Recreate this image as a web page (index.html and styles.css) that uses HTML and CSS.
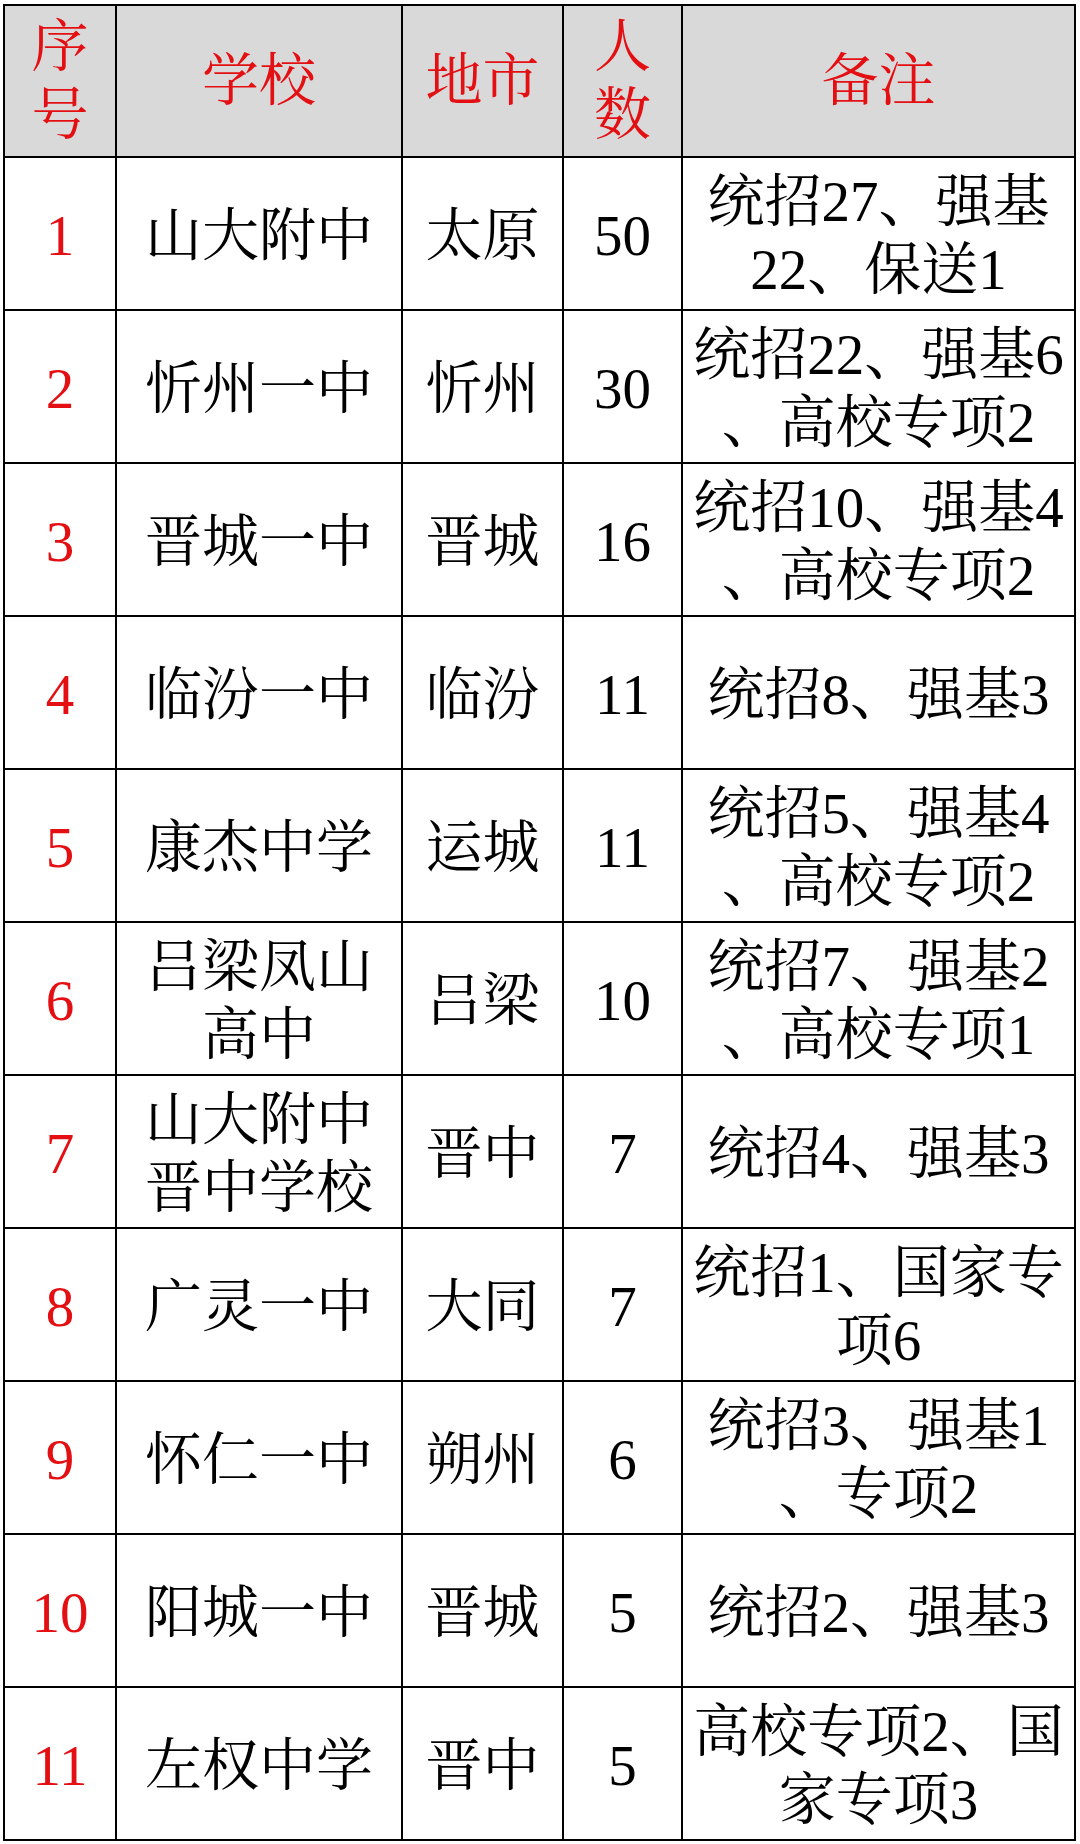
FILE: index.html
```html
<!DOCTYPE html>
<html lang="zh-CN">
<head>
<meta charset="utf-8">
<title>录取人数统计</title>
<link rel="stylesheet" href="styles.css">
</head>
<body>
<div class="page">
  <div class="sheet">
    <div class="cell head">序<br>号</div>
    <div class="cell head">学校</div>
    <div class="cell head">地市</div>
    <div class="cell head">人<br>数</div>
    <div class="cell head">备注</div>

    <div class="cell num">1</div>
    <div class="cell">山大附中</div>
    <div class="cell">太原</div>
    <div class="cell">50</div>
    <div class="cell note">统招27、强基<br>22、保送1</div>

    <div class="cell num">2</div>
    <div class="cell">忻州一中</div>
    <div class="cell">忻州</div>
    <div class="cell">30</div>
    <div class="cell note">统招22、强基6<br>、高校专项2</div>

    <div class="cell num">3</div>
    <div class="cell">晋城一中</div>
    <div class="cell">晋城</div>
    <div class="cell">16</div>
    <div class="cell note">统招10、强基4<br>、高校专项2</div>

    <div class="cell num">4</div>
    <div class="cell">临汾一中</div>
    <div class="cell">临汾</div>
    <div class="cell">11</div>
    <div class="cell note">统招8、强基3</div>

    <div class="cell num">5</div>
    <div class="cell">康杰中学</div>
    <div class="cell">运城</div>
    <div class="cell">11</div>
    <div class="cell note">统招5、强基4<br>、高校专项2</div>

    <div class="cell num">6</div>
    <div class="cell">吕梁凤山<br>高中</div>
    <div class="cell">吕梁</div>
    <div class="cell">10</div>
    <div class="cell note">统招7、强基2<br>、高校专项1</div>

    <div class="cell num">7</div>
    <div class="cell">山大附中<br>晋中学校</div>
    <div class="cell">晋中</div>
    <div class="cell">7</div>
    <div class="cell note">统招4、强基3</div>

    <div class="cell num">8</div>
    <div class="cell">广灵一中</div>
    <div class="cell">大同</div>
    <div class="cell">7</div>
    <div class="cell note">统招1、国家专<br>项6</div>

    <div class="cell num">9</div>
    <div class="cell">怀仁一中</div>
    <div class="cell">朔州</div>
    <div class="cell">6</div>
    <div class="cell note">统招3、强基1<br>、专项2</div>

    <div class="cell num">10</div>
    <div class="cell">阳城一中</div>
    <div class="cell">晋城</div>
    <div class="cell">5</div>
    <div class="cell note">统招2、强基3</div>

    <div class="cell num">11</div>
    <div class="cell">左权中学</div>
    <div class="cell">晋中</div>
    <div class="cell">5</div>
    <div class="cell note">高校专项2、国<br>家专项3</div>
  </div>
</div>
</body>
</html>
```

FILE: styles.css
```css
html, body {
  margin: 0;
  padding: 0;
  background: #ffffff;
}

.page {
  padding: 4px 0 0 3px;
}

.sheet {
  display: grid;
  grid-template-columns: 112px 286px 161px 119px 393px;
  grid-template-rows: 152px repeat(11, 153px);
  width: max-content;
  border-top: 2px solid #000;
  border-left: 2px solid #000;
  font-family: "Liberation Serif", "Noto Serif CJK SC", "Noto Sans CJK SC", serif;
  font-size: 57px;
  line-height: 68px;
  color: #000;
}

.cell {
  box-sizing: border-box;
  border-right: 2px solid #000;
  border-bottom: 2px solid #000;
  padding-top: 5px;
  display: flex;
  align-items: center;
  justify-content: center;
  text-align: center;
  white-space: nowrap;
  overflow: hidden;
}

.head {
  padding-top: 0;
  background: #d9d9d9;
  color: #e30f12;
}

.num {
  color: #e30f12;
}
```
